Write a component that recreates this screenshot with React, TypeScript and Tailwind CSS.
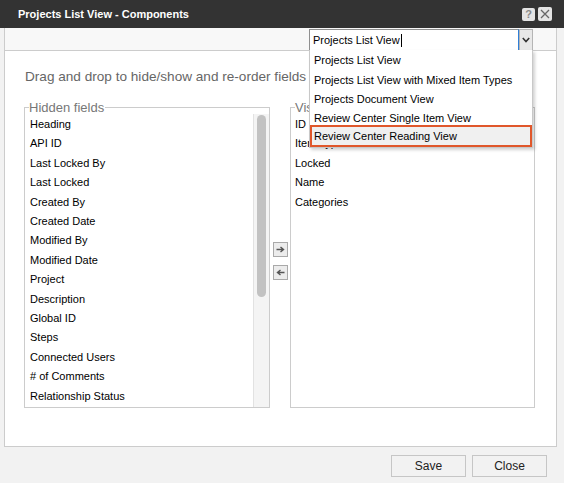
import React from 'react';

const hiddenFields = [
    'Heading', 'API ID', 'Last Locked By', 'Last Locked', 'Created By', 'Created Date',
    'Modified By', 'Modified Date', 'Project', 'Description', 'Global ID', 'Steps',
    'Connected Users', '# of Comments', 'Relationship Status',
];

const visibleFields = ['ID', 'Item Type', 'Locked', 'Name', 'Categories'];

const views = [
    'Projects List View',
    'Projects List View with Mixed Item Types',
    'Projects Document View',
    'Review Center Single Item View',
    'Review Center Reading View',
];

function ArrowButton({ dir }: { dir: 'right' | 'left' }) {
    return (
        <button className="w-[15px] h-[15px] bg-[#ececec] border border-[#a9a9a9] flex items-center justify-center">
            <svg width="9" height="7" viewBox="0 0 9 7" className={dir === 'left' ? 'rotate-180' : ''}>
                <path d="M0.5 3.5H7M4.5 1L7.5 3.5L4.5 6" fill="none" stroke="#555" strokeWidth="1.4" />
            </svg>
        </button>
    );
}

export default function App() {
    return (
        <div className="w-[564px] h-[483px] bg-[#f2f2f2] overflow-hidden font-['Liberation_Sans',Arial,sans-serif] text-black">
            {/* Title bar */}
            <div className="h-[28px] bg-[#333333] flex items-center justify-between pl-[18px] pr-[12px]">
                <span className="text-white font-bold text-[11px]">Projects List View - Components</span>
                <div className="flex items-center gap-[3px]">
                    <div className="w-[13px] h-[13px] bg-[#e4e4e4] rounded-[2px] flex items-center justify-center text-[#8a8a8a] font-bold text-[11px] leading-none">?</div>
                    <div className="w-[14px] h-[14px] bg-[#e4e4e4] rounded-[2px] flex items-center justify-center">
                        <svg width="10" height="10" viewBox="0 0 10 10">
                            <path d="M1 1L9 9M9 1L1 9" stroke="#666" strokeWidth="1.3" />
                        </svg>
                    </div>
                </div>
            </div>

            {/* Panel */}
            <div className="ml-[4px] w-[553px] h-[419px] bg-white border-x border-b border-[#cccccc] flex flex-col">
                {/* Toolbar with view select */}
                <div className="h-[23px] bg-[#f8f8f8] border-b border-[#cccccc] relative flex items-start pl-[304px] pt-[1px]">
                    <div className="w-[210px] h-[22px] bg-white border border-[#8f8f8f] border-r-[#2f7fd8] border-b-[#2f7fd8] flex items-center pl-[3px] text-[11px]">
                        Projects List View
                        <span className="w-px h-[13px] bg-black ml-px" />
                    </div>
                    <div className="w-[14px] h-[22px] bg-[#e8e8e8] border border-[#b5b5b5] flex items-center justify-center">
                        <svg width="8" height="6" viewBox="0 0 8 6">
                            <path d="M0.8 1L4 4.5L7.2 1" fill="none" stroke="#333" strokeWidth="1.6" />
                        </svg>
                    </div>

                    {/* Open dropdown */}
                    <div className="absolute top-full left-[304px] w-[224px] bg-white border border-[#c8c8c8] border-t-0 shadow-[2px_2px_3px_rgba(0,0,0,0.18)] z-10 text-[11px] pt-px">
                        {views.map((v, i) => (
                            <div
                                key={v}
                                className={
                                    i === views.length - 1
                                        ? 'h-[22px] -mt-[3px] flex items-center pl-[2px] bg-[#f0f0f0] border-2 border-[#e0572b]'
                                        : 'h-[19.3px] flex items-center pl-[4px]'
                                }
                            >
                                {v}
                            </div>
                        ))}
                    </div>
                </div>

                {/* Body */}
                <div className="flex-1 flex flex-col pl-[19px]">
                    <p className="mt-[18px] ml-px text-[13.6px] text-[#666] leading-[15px]">
                        Drag and drop to hide/show and re-order fields
                    </p>
                    <div className="mt-[16px] flex items-start">
                        <fieldset className="w-[246px] h-[308px] border border-[#cccccc] pl-[4px] flex flex-col">
                            <legend className="text-[13px] text-[#777] leading-[15px] pr-px">Hidden fields</legend>
                            <div className="flex flex-1 min-h-0">
                                <div className="flex-1 pl-px text-[11px] leading-[19.4px]">
                                    {hiddenFields.map((f) => (
                                        <div key={f}>{f}</div>
                                    ))}
                                </div>
                                <div className="w-[16px] bg-[#f4f4f4] border-l border-[#e2e2e2] flex justify-center pt-px -mt-px">
                                    <div className="w-[9px] h-[182px] rounded-full bg-[#c2c2c2]" />
                                </div>
                            </div>
                        </fieldset>

                        <div className="w-[20px] self-stretch flex flex-col items-center pt-[142px] gap-[8px]">
                            <ArrowButton dir="right" />
                            <ArrowButton dir="left" />
                        </div>

                        <fieldset className="w-[245px] h-[308px] border border-[#cccccc] pl-[4px]">
                            <legend className="text-[13px] text-[#777] leading-[15px] pr-px">Visible fields</legend>
                            <div className="text-[11px] leading-[19.4px]">
                                {visibleFields.map((f) => (
                                    <div key={f}>{f}</div>
                                ))}
                            </div>
                        </fieldset>
                    </div>
                </div>
            </div>

            {/* Footer buttons */}
            <div className="flex justify-end gap-[6px] pr-[17px] pt-[8px]">
                <button className="w-[75px] h-[22px] bg-[#f2f2f2] border border-[#c6c6c6] text-[12px] text-[#222]">Save</button>
                <button className="w-[75px] h-[22px] bg-[#f2f2f2] border border-[#c6c6c6] text-[12px] text-[#222]">Close</button>
            </div>
        </div>
    );
}
